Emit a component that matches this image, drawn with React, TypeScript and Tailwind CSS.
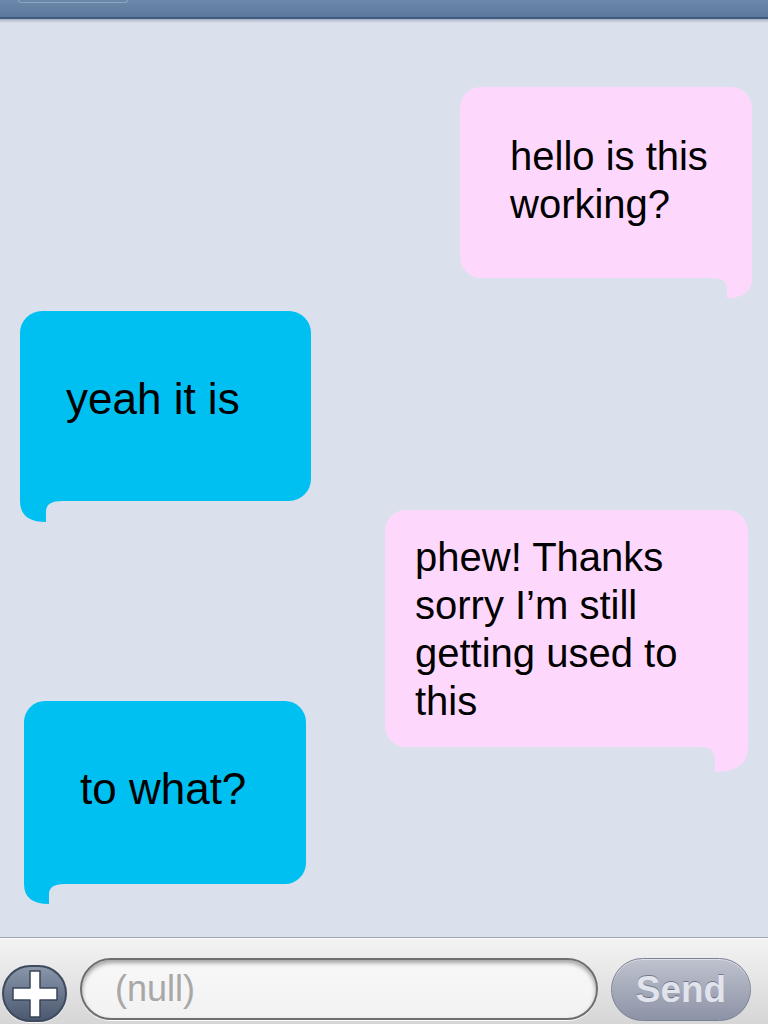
import React from "react";

type Side = "left" | "right";

function Tail({ side, w, h, c, color }: { side: Side; w: number; h: number; c: number; color: string }) {
  const W = w + c;
  const d =
    side === "right"
      ? `M${W} 0 L${W} 1 Q${W} ${h + 1} ${W - w} ${h + 1} L${W - w} ${h * 0.5 + 1} Q${W - w} 1 0 1 L0 0 Z`
      : `M0 0 L0 1 Q0 ${h + 1} ${w} ${h + 1} L${w} ${h * 0.5 + 1} Q${w} 1 ${W} 1 L${W} 0 Z`;
  return (
    <svg
      width={W}
      height={h + 1}
      viewBox={`0 0 ${W} ${h + 1}`}
      className={`absolute top-full -mt-px ${side === "right" ? "right-0" : "left-0"}`}
    >
      <path d={d} fill={color} />
    </svg>
  );
}

const PINK = "#fed8fc";
const BLUE = "#00c0f2";

export default function App() {
  return (
    <div className="w-[768px] h-[1024px] flex flex-col overflow-hidden bg-[#dbe1ec] font-['Liberation_Sans',Arial,sans-serif] text-black">
      {/* top bar */}
      <div className="h-[17px] bg-gradient-to-b from-[#6c88aa] to-[#5c789d] flex items-start">
        <div className="ml-[18px] w-[110px] h-[3px] rounded-b-[6px] border-b border-x border-[#8ea4c0] bg-[#6a86a8]" />
      </div>
      <div className="h-[2px] bg-[#3f5b81]" />
      <div className="h-[4px] bg-gradient-to-b from-[#a7b1c3] to-[#dbe1ec]" />

      {/* chat */}
      <div className="flex-1 flex flex-col">
        {/* bubble 1 */}
        <div className="self-end mr-[16px] mt-[64px] relative w-[292px] h-[191px] bg-[#fed8fc] rounded-[21px] rounded-br-none pl-[50px] pt-[45px] text-[40px] leading-[48px]">
          hello is this
          <br />
          working?
          <Tail side="right" w={25} h={20} c={15} color={PINK} />
        </div>

        {/* bubble 2 */}
        <div className="self-start ml-[20px] mt-[33px] relative w-[291px] h-[190px] bg-[#00c0f2] rounded-[22px] rounded-bl-none pl-[46px] pt-[63px] text-[44px] leading-[50px]">
          yeah it is
          <Tail side="left" w={26} h={21} c={16} color={BLUE} />
        </div>

        {/* bubble 3 */}
        <div className="self-end mr-[20px] mt-[9px] relative w-[363px] h-[237px] bg-[#fed8fc] rounded-[21px] rounded-br-none pl-[30px] pt-[23px] text-[40px] leading-[48px]">
          phew! Thanks
          <br />
          sorry I’m still
          <br />
          getting used to
          <br />
          this
          <Tail side="right" w={33} h={25} c={13} color={PINK} />
        </div>

        {/* bubble 4 */}
        <div className="self-start ml-[24px] -mt-[46px] relative w-[282px] h-[183px] bg-[#00c0f2] rounded-[21px] rounded-bl-none pl-[56px] pt-[63px] text-[44px] leading-[50px]">
          to what?
          <Tail side="left" w={25} h={20} c={15} color={BLUE} />
        </div>
      </div>

      {/* toolbar */}
      <div className="h-[1px] bg-[#a3a7ae]" />
      <div className="h-[86px] bg-gradient-to-b from-[#f3f3f3] to-[#d6d6d6] flex items-start pt-[19px] border-t border-[#fafafa]">
        <div className="ml-[2px] mt-[7px] w-[65px] h-[57px] rounded-full border-2 border-[#3e4a5e] bg-gradient-to-b from-[#8a96aa] to-[#4b5970] flex items-center justify-center shadow-[0_1px_0_rgba(255,255,255,0.7)]">
          <svg width="48" height="50" viewBox="0 0 48 50">
            <path
              d="M19 2 H29 V19 H46 V31 H29 V48 H19 V31 H2 V19 H19 Z"
              fill="#ffffff"
              stroke="#3a4558"
              strokeWidth="1.5"
              strokeLinejoin="round"
            />
          </svg>
        </div>
        <div className="ml-[13px] w-[518px] h-[62px] rounded-full border-2 border-[#6e6e6e] bg-gradient-to-b from-[#f8f8f8] to-[#f2f2f2] shadow-[inset_0_3px_4px_rgba(0,0,0,0.35),0_1px_0_rgba(255,255,255,0.9)] flex items-center pl-[33px]">
          <span className="text-[36px] text-[#a8a8a8] leading-none">(null)</span>
        </div>
        <div className="ml-[13px] w-[140px] h-[63px] rounded-full border border-[#7c8295] bg-gradient-to-b from-[#bfc3cf] to-[#8d93a6] shadow-[inset_0_1px_0_rgba(255,255,255,0.5)] flex items-center justify-center">
          <span className="text-[37px] font-bold text-[#e1e4ec] leading-none [text-shadow:0_-1px_0_rgba(60,66,85,0.55)]">Send</span>
        </div>
      </div>
    </div>
  );
}
